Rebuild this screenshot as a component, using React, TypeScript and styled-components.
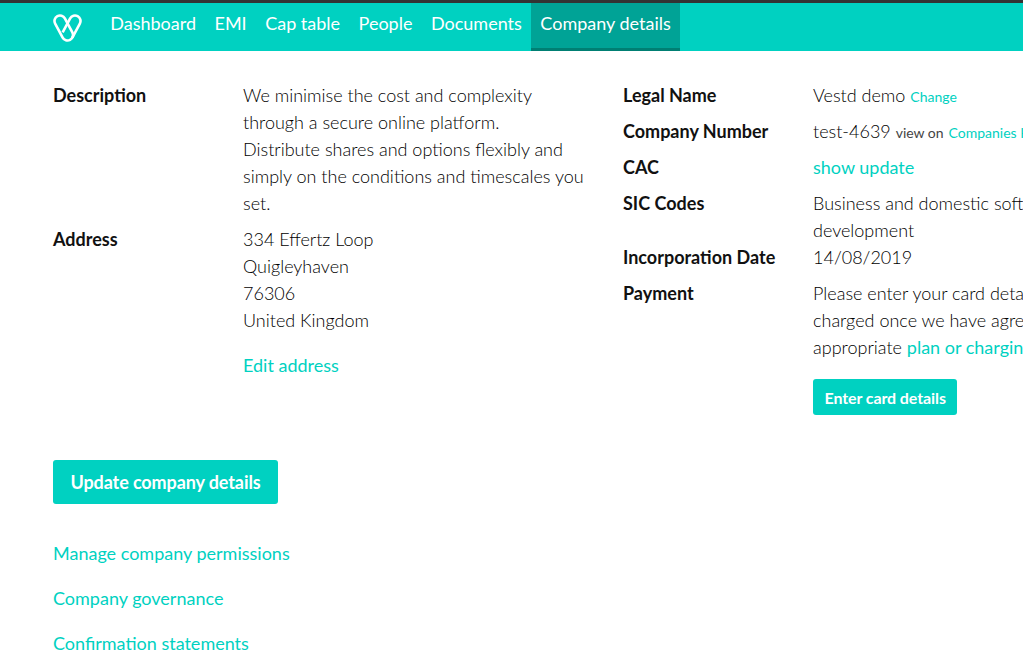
import React from 'react';
import styled, { createGlobalStyle } from 'styled-components';

const GlobalStyle = createGlobalStyle`
  html, body {
    margin: 0;
    padding: 0;
    height: 100%;
    overflow: hidden;
    background: #fff;
  }
  body {
    font-family: Lato, "Liberation Sans", sans-serif;
    font-size: 18px;
    line-height: 27px;
    color: #000;
  }
`;

const teal = '#00d1c1';

const Nav = styled.nav`
  display: flex;
  height: 48px;
  border-top: 3px solid #333;
  background: ${teal};
  padding-left: 53px;
`;
const Logo = styled.svg`
  width: 29px;
  height: 28px;
  margin: 11px 19px 0 0;
  flex: none;
`;
const NavItem = styled.a<{ $active?: boolean }>`
  display: block;
  box-sizing: border-box;
  height: 48px;
  padding: 7px 9.25px 0;
  color: #fff;
  font-size: 18px;
  font-weight: 400;
  white-space: nowrap;
  background: ${p => (p.$active ? '#00a396' : 'transparent')};
  border-bottom: ${p => (p.$active ? '3px solid #007f73' : '0')};
`;
const Main = styled.main`
  width: 1300px;
  padding: 31px 0 0 53px;
`;
const Columns = styled.div`
  display: flex;
  gap: 38px;
`;
const LeftColumn = styled.div`
  width: 532px;
  flex: none;
`;
const RightColumn = styled.div`
  flex: 1;
`;
const Row = styled.div<{ $gap?: number }>`
  display: grid;
  grid-template-columns: 190px 1fr;
  margin-bottom: ${p => p.$gap ?? 9}px;
`;
const Label = styled.div`
  font-weight: 700;
  color: #111;
`;
const Value = styled.div`
  font-weight: 300;
`;
const Line = styled.div`
  white-space: nowrap;
`;
const Small = styled.span`
  font-size: 14px;
  font-weight: 400;
  color: #444;
  line-height: 1;
`;
const Link = styled.a<{ $small?: boolean }>`
  color: ${teal};
  font-weight: 400;
  line-height: 1;
  font-size: ${p => (p.$small ? '14px' : '18px')};
`;
const EditLink = styled(Link)`
  display: block;
  line-height: 27px;
  margin-top: 18px;
`;
const Button = styled.button<{ $large?: boolean }>`
  display: block;
  box-sizing: border-box;
  border: 0;
  border-radius: 3px;
  background: ${teal};
  color: #fff;
  font-family: inherit;
  font-weight: 700;
  letter-spacing: -0.1px;
  font-size: ${p => (p.$large ? '18px' : '16px')};
  height: ${p => (p.$large ? '44px' : '36px')};
  padding: 0 ${p => (p.$large ? '17.5px' : '11.5px')};
`;
const CardButton = styled(Button)`
  margin-top: 18px;
`;
const UpdateButton = styled(Button)`
  margin-top: 36px;
`;
const Links = styled.div`
  display: flex;
  flex-direction: column;
  align-items: flex-start;
  gap: 18px;
  margin-top: 36px;
`;
const PageLink = styled(Link)`
  line-height: 27px;
`;

const App = () => (
  <>
    <GlobalStyle />
    <Nav>
      <Logo viewBox="0 0 29 28" fill="none" stroke="#fff" strokeWidth="2.6" strokeLinejoin="round">
        <path d="M11.85 4.4 L19.35 18.4 A5.5 5.5 0 0 1 9.65 23.6 L2.15 9.6 A5.5 5.5 0 0 1 11.85 4.4 Z" />
        <path d="M9.65 18.4 L17.15 4.4 A5.5 5.5 0 0 1 26.85 9.6 L19.35 23.6" />
      </Logo>
      <NavItem>Dashboard</NavItem>
      <NavItem>EMI</NavItem>
      <NavItem>Cap table</NavItem>
      <NavItem>People</NavItem>
      <NavItem>Documents</NavItem>
      <NavItem $active>Company details</NavItem>
    </Nav>
    <Main>
      <Columns>
        <LeftColumn>
          <Row>
            <Label>Description</Label>
            <Value>
              <Line>We minimise the cost and complexity</Line>
              <Line>through a secure online platform.</Line>
              <Line>Distribute shares and options flexibly and</Line>
              <Line>simply on the conditions and timescales you</Line>
              <Line>set.</Line>
            </Value>
          </Row>
          <Row>
            <Label>Address</Label>
            <Value>
              <Line>334 Effertz Loop</Line>
              <Line>Quigleyhaven</Line>
              <Line>76306</Line>
              <Line>United Kingdom</Line>
              <EditLink>Edit address</EditLink>
            </Value>
          </Row>
        </LeftColumn>
        <RightColumn>
          <Row>
            <Label>Legal Name</Label>
            <Value>
              Vestd demo <Link $small>Change</Link>
            </Value>
          </Row>
          <Row>
            <Label>Company Number</Label>
            <Value>
              test-4639 <Small>view on</Small> <Link $small>Companies House</Link>
            </Value>
          </Row>
          <Row>
            <Label>CAC</Label>
            <Value>
              <Link>show update</Link>
            </Value>
          </Row>
          <Row $gap={0}>
            <Label>SIC Codes</Label>
            <Value>
              <Line>Business and domestic software</Line>
              <Line>development</Line>
            </Value>
          </Row>
          <Row>
            <Label>Incorporation Date</Label>
            <Value>14/08/2019</Value>
          </Row>
          <Row>
            <Label>Payment</Label>
            <Value>
              <Line>Please enter your card details. You will be</Line>
              <Line>charged once we have agreed the</Line>
              <Line>
                appropriate <Link>plan or charging</Link>
              </Line>
              <CardButton>Enter card details</CardButton>
            </Value>
          </Row>
        </RightColumn>
      </Columns>
      <UpdateButton $large>Update company details</UpdateButton>
      <Links>
        <PageLink>Manage company permissions</PageLink>
        <PageLink>Company governance</PageLink>
        <PageLink>Confirmation statements</PageLink>
      </Links>
    </Main>
  </>
);

export default App;
